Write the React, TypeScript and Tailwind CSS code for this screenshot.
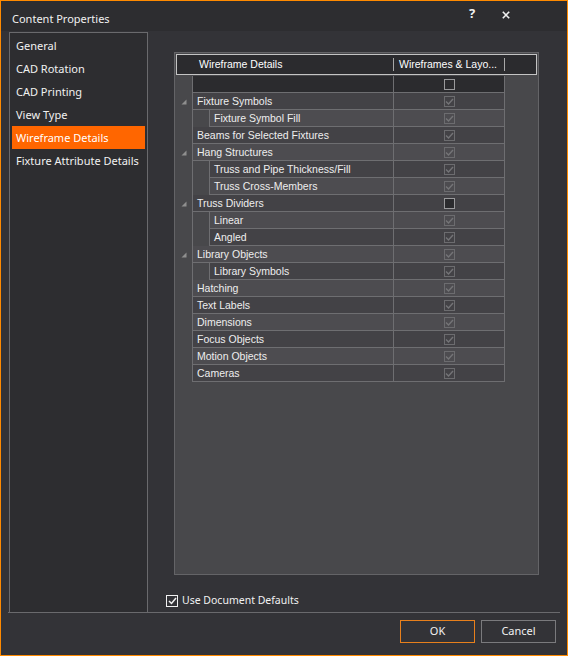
import { Fragment } from 'react'

type Row = { label: string; level: 0 | 1; expander?: boolean; checked: boolean }

const rows: Row[] = [
  { label: '', level: 0, checked: false },
  { label: 'Fixture Symbols', level: 0, expander: true, checked: true },
  { label: 'Fixture Symbol Fill', level: 1, checked: true },
  { label: 'Beams for Selected Fixtures', level: 0, checked: true },
  { label: 'Hang Structures', level: 0, expander: true, checked: true },
  { label: 'Truss and Pipe Thickness/Fill', level: 1, checked: true },
  { label: 'Truss Cross-Members', level: 1, checked: true },
  { label: 'Truss Dividers', level: 0, expander: true, checked: false },
  { label: 'Linear', level: 1, checked: true },
  { label: 'Angled', level: 1, checked: true },
  { label: 'Library Objects', level: 0, expander: true, checked: true },
  { label: 'Library Symbols', level: 1, checked: true },
  { label: 'Hatching', level: 0, checked: true },
  { label: 'Text Labels', level: 0, checked: true },
  { label: 'Dimensions', level: 0, checked: true },
  { label: 'Focus Objects', level: 0, checked: true },
  { label: 'Motion Objects', level: 0, checked: true },
  { label: 'Cameras', level: 0, checked: true },
]

const pages = ['General', 'CAD Rotation', 'CAD Printing', 'View Type', 'Wireframe Details', 'Fixture Attribute Details']

const uiFont = "font-['Noto_Sans','Open_Sans',sans-serif]"
const gridFont = "font-['Liberation_Sans','Arial',sans-serif]"

export default function App() {
  return (
    <div className={`w-[568px] h-[656px] border border-[#ff8a00] bg-[#333337] flex flex-col text-[#f1f1f1] ${uiFont}`}>
      {/* Title bar */}
      <div className="h-[30px] bg-[#2d2d30] flex items-start shrink-0">
        <div className="pl-[11px] pt-[10px] text-[11px] leading-[16px]">Content Properties</div>
        <div className="ml-auto flex items-start pt-[4px] mr-[44px]">
          <span className="w-[34px] text-center text-[13px] font-bold leading-[16px]">?</span>
          <span className="w-[34px] text-center leading-[16px]">
            <svg width="8" height="8" viewBox="0 0 8 8" className="inline-block">
              <path d="M0.8 0.8 L7.2 7.2 M7.2 0.8 L0.8 7.2" stroke="#f1f1f1" strokeWidth="1.6" />
            </svg>
          </span>
        </div>
      </div>

      {/* Content */}
      <div className="flex flex-1">
        {/* Page list */}
        <div className="ml-[8px] mt-[1px] w-[139px] border-l border-t border-r border-[#6a6a6d] bg-[#2d2d30] pt-[1px] px-[2px]">
          {pages.map((p) => (
            <div
              key={p}
              className={`h-[23px] flex items-center pl-[4px] pt-[2px] text-[11px] whitespace-nowrap ${p === 'Wireframe Details' ? 'bg-[#ff6600] text-white' : ''}`}
            >
              {p}
            </div>
          ))}
        </div>

        {/* Right side */}
        <div className="flex flex-col">
          <div className="ml-[26px] mt-[21px] w-[365px] h-[523px] border border-[#646467] bg-[#48484b] p-px">
            {/* Header */}
            <div className={`h-[21px] border border-[#c4c4c4] bg-[#2b2b2e] flex items-center text-[10.5px] text-white ${gridFont}`}>
              <div className="w-[216px] pl-[22px]">Wireframe Details</div>
              <div className="w-px h-[13px] bg-[#a8a8a8]" />
              <div className="w-[110px] pl-[5px] whitespace-nowrap">Wireframes &amp; Layo...</div>
              <div className="w-px h-[13px] bg-[#a8a8a8]" />
            </div>

            {/* Rows */}
            <div className={`w-[329px] mt-px text-[10.5px] text-[#eeeeee] ${gridFont}`}>
              {rows.map((r, i) => {
                const bg = i === 0 ? 'bg-[#2b2b2e]' : i % 2 === 0 ? 'bg-[#4d4c50]' : 'bg-[#434246]'
                return (
                  <div key={i} className={`flex ${i === 0 ? 'h-[17px]' : 'h-[17px]'}`}>
                    <div className="w-[16px] shrink-0 flex items-center justify-center">
                      {r.expander && (
                        <svg width="6" height="6" viewBox="0 0 6 6">
                          <polygon points="5.5,0.5 5.5,5.5 0.5,5.5" fill="#8f8f8f" />
                        </svg>
                      )}
                    </div>
                    {r.level === 1 && (
                      <Fragment>
                        <div className="w-[17px] shrink-0 border-l border-[#6e6e71]" />
                      </Fragment>
                    )}
                    <div className={`flex-1 border-l border-b border-[#6e6e71] ${bg} flex items-center pl-[4px] pt-px whitespace-nowrap`}>
                      {r.label}
                    </div>
                    <div className={`w-[112px] shrink-0 border-l border-r border-b border-[#6e6e71] ${bg} flex items-center justify-center`}>
                      <CheckCell checked={r.checked} enabled={!r.checked} />
                    </div>
                  </div>
                )
              })}
            </div>
          </div>

          <div className="ml-[18px] mt-[18px] flex items-center gap-[4px] text-[10.5px]">
            <div className="w-[12px] h-[12px] border border-[#f1f1f1] flex items-center justify-center">
              <svg width="9" height="8" viewBox="0 0 9 8">
                <path d="M1 4 L3.5 6.5 L8 1" stroke="#f1f1f1" strokeWidth="1.5" fill="none" />
              </svg>
            </div>
            <span>Use Document Defaults</span>
          </div>
        </div>
      </div>

      {/* Footer */}
      <div className="ml-[7px] w-[552px] h-px bg-[#6a6a6d]" />
      <div className="h-[42px] flex justify-end items-start pt-[7px] pr-[11px] gap-[6px] text-[11px]">
        <button className="w-[75px] h-[23px] border border-[#e8801c] text-[#f1f1f1]">OK</button>
        <button className="w-[75px] h-[23px] border border-[#7a7a7d] text-[#f1f1f1]">Cancel</button>
      </div>
    </div>
  )
}

function CheckCell({ checked, enabled }: { checked: boolean; enabled: boolean }) {
  return (
    <div
      className={`w-[11px] h-[11px] border flex items-center justify-center ${enabled ? 'border-[#9a9a9c] bg-[#2b2b2e]' : 'border-[#6c6c6f]'}`}
    >
      {checked && (
        <svg width="9" height="7" viewBox="0 0 9 7">
          <path d="M1 3.5 L3.5 6 L8 1" stroke="#747477" strokeWidth="1.4" fill="none" />
        </svg>
      )}
    </div>
  )
}
